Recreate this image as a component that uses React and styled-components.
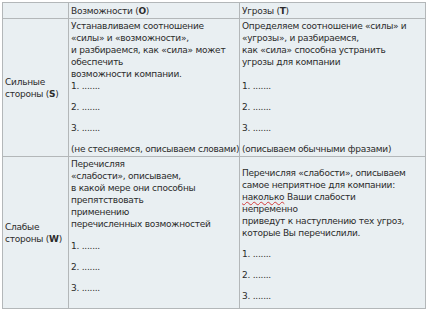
import React from 'react';
import styled, { createGlobalStyle } from 'styled-components';

const GlobalStyle = createGlobalStyle`
  body {
    margin: 0;
    background: #ffffff;
    font-family: 'DejaVu Sans', Verdana, sans-serif;
  }
`;

const Table = styled.table`
  margin: 2px 0 0 2px;
  width: 423px;
  table-layout: fixed;
  border-collapse: collapse;
  background: #e9eff2;
  color: #2b2b2b;
  font-size: 9px;
  line-height: 12px;
  border: 1px solid #a9a9a9;
`;

const Col = styled.col`
  width: ${({ $w }) => $w}px;
`;

const Cell = styled.td`
  border: 1px solid #b3b7b9;
  padding: ${({ $head }) => ($head ? '2px 2px 1px' : '1px 2px 1px')};
  vertical-align: ${({ $middle }) => ($middle ? 'middle' : 'top')};
  white-space: nowrap;
  letter-spacing: -0.25px;
  overflow: hidden;
`;

const Gap = styled.div`
  height: ${({ $h = 9 }) => $h}px;
`;

const Typo = styled.span`
  text-decoration: underline wavy #d23c3c;
  text-decoration-thickness: 1px;
  text-underline-offset: 1px;
`;

const Items = ({ after }) => (
  <>
    <div>1. .......</div>
    <Gap />
    <div>2. .......</div>
    <Gap />
    <div>3. .......</div>
    {after && <Gap />}
  </>
);

export default function App() {
  return (
    <>
      <GlobalStyle />
      <Table>
        <colgroup>
          <Col $w={66} />
          <Col $w={171} />
          <Col $w={186} />
        </colgroup>
        <tbody>
          <tr>
            <Cell $head></Cell>
            <Cell $head>Возможности (<b>O</b>)</Cell>
            <Cell $head>Угрозы (<b>T</b>)</Cell>
          </tr>
          <tr>
            <Cell $middle>
              Сильные<br />стороны (<b>S</b>)
            </Cell>
            <Cell>
              Устанавливаем соотношение<br />
              «силы» и «возможности»,<br />
              и разбираемся, как «сила» может<br />
              обеспечить<br />
              возможности компании.
              <Items after />
              <div>(не стесняемся, описываем словами)</div>
            </Cell>
            <Cell>
              Определяем соотношение «силы» и<br />
              «угрозы», и разбираемся,<br />
              как «сила» способна устранить<br />
              угрозы для компании
              <Gap $h={12} />
              <Items after />
              <div>(описываем обычными фразами)</div>
            </Cell>
          </tr>
          <tr>
            <Cell $middle>
              Слабые<br />стороны (<b>W</b>)
            </Cell>
            <Cell>
              Перечисляя<br />
              «слабости», описываем,<br />
              в какой мере они способны<br />
              препятствовать<br />
              применению<br />
              перечисленных возможностей
              <Gap $h={10} />
              <Items />
            </Cell>
            <Cell>
              <Gap $h={9} />
              Перечисляя «слабости», описываем<br />
              самое неприятное для компании:<br />
              <Typo>наколько</Typo> Ваши слабости<br />
              непременно<br />
              приведут к наступлению тех угроз,<br />
              которые Вы перечислили.
              <Gap />
              <Items />
              <Gap $h={5} />
            </Cell>
          </tr>
        </tbody>
      </Table>
    </>
  );
}
